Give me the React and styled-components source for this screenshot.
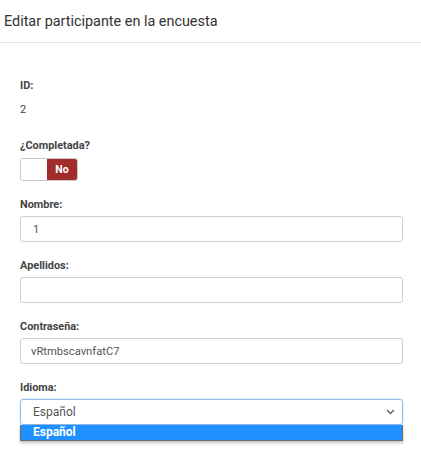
import React from "react";
import styled, { createGlobalStyle } from "styled-components";

const GlobalStyle = createGlobalStyle`
  body {
    margin: 0;
    background: #ffffff;
    font-family: Roboto, "Liberation Sans", Arial, sans-serif;
    color: #333;
  }
`;

const Page = styled.div`
  width: 421px;
  height: 456px;
  overflow: hidden;
  background: #fff;
`;

const Header = styled.div`
  height: 42px;
  display: flex;
  align-items: center;
  padding-left: 4px;
  border-bottom: 1px solid #e3e3e3;
  font-size: 14.4px;
  color: #333;
`;

const Form = styled.div`
  display: flex;
  flex-direction: column;
  padding: 36px 18px 0 20px;
`;

const Label = styled.div`
  font-size: 10.9px;
  line-height: 14px;
  font-weight: 700;
  color: #444;
  margin-bottom: ${(p) => p.gap || 4}px;
`;

const Value = styled.div`
  font-size: 11px;
  line-height: 14px;
  color: #444;
  margin-bottom: 22px;
`;

const Toggle = styled.div`
  display: flex;
  width: 58px;
  height: 23px;
  border: 1px solid #c8c8c8;
  border-radius: 3px;
  box-sizing: border-box;
  overflow: hidden;
  margin-bottom: 17px;
`;

const ToggleOff = styled.div`
  flex: 1;
  background: #fff;
`;

const ToggleOn = styled.div`
  width: 30px;
  background: #a02d2a;
  color: #fff;
  font-size: 10.5px;
  font-weight: 700;
  display: flex;
  align-items: center;
  justify-content: center;
`;

const Input = styled.div`
  height: 26px;
  box-sizing: border-box;
  border: 1px solid ${(p) => (p.focused ? "#8fb9e6" : "#cfcfcf")};
  border-radius: 3px;
  display: flex;
  align-items: center;
  justify-content: space-between;
  padding: 0 7px 0 ${(p) => p.pad || 10}px;
  font-size: ${(p) => (p.focused ? 12 : 11.2)}px;
  color: #555;
  margin-bottom: 17px;
  box-shadow: ${(p) => (p.focused ? "0 0 2px rgba(80,150,220,0.4)" : "none")};
`;

const SelectWrap = styled.div`
  position: relative;
`;

const Options = styled.div`
  position: absolute;
  left: 0;
  right: 0;
  top: 26px;
  border: 1px solid #6b6b6b;
  border-top: none;
  box-shadow: 0 2px 3px rgba(0, 0, 0, 0.25);
  background: #fff;
`;

const Option = styled.div`
  height: 15px;
  line-height: 15px;
  background: #1e90ff;
  color: #fff;
  font-size: 12px;
  font-weight: 700;
  padding-left: 12px;
`;

const Chevron = () => (
  <svg width="9" height="6" viewBox="0 0 10 7">
    <path d="M1 1.2 L5 5.2 L9 1.2" fill="none" stroke="#666" strokeWidth="1.8" />
  </svg>
);

export default function App() {
  return (
    <Page>
      <GlobalStyle />
      <Header>Editar participante en la encuesta</Header>
      <Form>
        <Label gap={10}>ID:</Label>
        <Value>2</Value>
        <Label gap={5}>¿Completada?</Label>
        <Toggle>
          <ToggleOff />
          <ToggleOn>No</ToggleOn>
        </Toggle>
        <Label>Nombre:</Label>
        <Input pad={12}>1</Input>
        <Label>Apellidos:</Label>
        <Input />
        <Label>Contraseña:</Label>
        <Input>vRtmbscavnfatC7</Input>
        <Label>Idioma:</Label>
        <SelectWrap>
          <Input focused pad={12}>
            <span>Español</span>
            <Chevron />
          </Input>
          <Options>
            <Option>Español</Option>
          </Options>
        </SelectWrap>
      </Form>
    </Page>
  );
}
